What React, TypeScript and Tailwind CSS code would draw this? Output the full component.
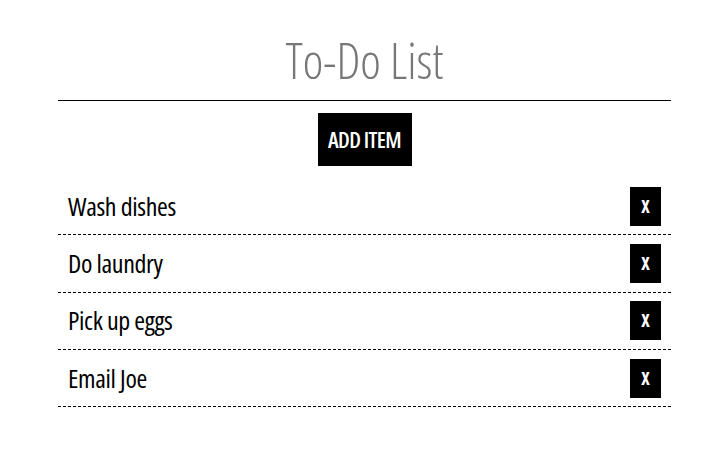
import React from "react";

const items = ["Wash dishes", "Do laundry", "Pick up eggs", "Email Joe"];

export default function App() {
  return (
    <div
      className="w-[719px] h-[472px] bg-white"
      style={{ fontFamily: '"Open Sans", "Liberation Sans", sans-serif' }}
    >
      <div className="ml-[58px] w-[613px] pt-[30px]">
        <h1 className="text-center text-[49px] leading-[60px] font-light font-stretch-condensed text-[#777777] border-b border-black pb-[10px]">
          To-Do List
        </h1>
        <div className="flex justify-center mt-[12px]">
          <button className="bg-black text-white font-semibold font-stretch-condensed text-[22px] tracking-[-0.6px] h-[53px] w-[94px]">
            ADD ITEM
          </button>
        </div>
        <ul className="mt-[12px]">
          {items.map((t) => (
            <li
              key={t}
              className="flex items-center justify-between h-[57.33px] border-b border-dashed border-black pl-[10px] pr-[10px]"
            >
              <span className="text-[26px] tracking-[-0.35px] font-stretch-condensed text-black">{t}</span>
              <button className="bg-black text-white font-bold font-stretch-condensed text-[18px] w-[31px] h-[39px]">
                X
              </button>
            </li>
          ))}
        </ul>
      </div>
    </div>
  );
}
